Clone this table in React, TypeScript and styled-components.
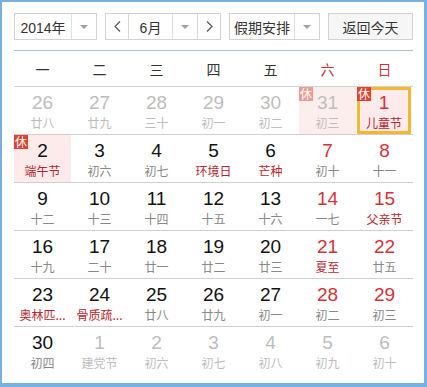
import React from 'react';
import styled, { createGlobalStyle, css } from 'styled-components';

const GlobalStyle = createGlobalStyle`
    html, body {
        margin: 0;
        padding: 0;
        background: #ffffff;
    }
`;

const FONT = `"Liberation Sans", Arial, "Noto Sans CJK SC", sans-serif`;

const Frame = styled.div`
    width: 427px;
    height: 387px;
    box-sizing: border-box;
    border-style: solid;
    border-color: #78b0e2;
    border-width: 2px 3px 4px 2px;
    background: #ffffff;
    padding: 11px 11px 0 12px;
    font-family: ${FONT};
`;

const Toolbar = styled.div`
    display: flex;
    align-items: stretch;
    height: 27px;
    gap: 8px;
`;

const SelectBox = styled.div<{ $width: number; $gray?: boolean }>`
    display: flex;
    align-items: stretch;
    width: ${(p) => p.$width}px;
    box-sizing: border-box;
    border: 1px solid #d2d2d2;
    background: ${(p) => (p.$gray ? '#f6f6f6' : '#ffffff')};
    color: #333;
    font-size: 14px;
`;

const SelectLabel = styled.div`
    flex: 1;
    display: flex;
    align-items: center;
    justify-content: center;
    white-space: nowrap;
`;

const CaretCell = styled.div`
    width: 24px;
    display: flex;
    align-items: center;
    justify-content: center;
    border-left: 1px solid #e0e0e0;
    &::after {
        content: '';
        border-left: 4px solid transparent;
        border-right: 4px solid transparent;
        border-top: 4px solid #a0a0a0;
    }
`;

const ArrowCell = styled.div<{ $side: 'left' | 'right' }>`
    width: 22px;
    display: flex;
    align-items: center;
    justify-content: center;
    ${(p) =>
        p.$side === 'left'
            ? css`
                  border-right: 1px solid #d8d8d8;
              `
            : css`
                  border-left: 1px solid #d8d8d8;
              `}
`;

const Chevron = ({ dir }: { dir: 'left' | 'right' }) => (
    <svg width="7" height="11" viewBox="0 0 7 11">
        <path
            d={dir === 'left' ? 'M6 0.5 L1 5.5 L6 10.5' : 'M1 0.5 L6 5.5 L1 10.5'}
            fill="none"
            stroke="#555"
            strokeWidth="1.2"
        />
    </svg>
);

const HeaderRule = styled.div`
    margin-top: 10px;
    border-top: 1px solid #a6c1d8;
`;

const WeekHead = styled.div`
    display: grid;
    grid-template-columns: repeat(7, 57px);
    height: 35px;
    border-bottom: 1px solid #d3d3d3;
`;

const WeekName = styled.div<{ $weekend?: boolean }>`
    display: flex;
    align-items: center;
    justify-content: center;
    font-size: 14px;
    font-family: "Noto Sans CJK SC", sans-serif;
    color: ${(p) => (p.$weekend ? '#c8333a' : '#333')};
`;

const WeekRow = styled.div<{ $last?: boolean }>`
    display: grid;
    grid-template-columns: repeat(7, 57px);
    height: 48px;
    box-sizing: border-box;
    border-bottom: ${(p) => (p.$last ? 'none' : '1px solid #cfcfcf')};
`;

const Cell = styled.div<{ $rest?: 'on' | 'faded'; $today?: boolean }>`
    position: relative;
    display: flex;
    flex-direction: column;
    align-items: center;
    box-sizing: border-box;
    padding-top: 6px;
    background: ${(p) => (p.$rest === 'on' ? '#fdeaea' : p.$rest === 'faded' ? '#fdeeee' : 'transparent')};
    ${(p) =>
        p.$today &&
        css`
            border: 3px solid #f4b72f;
            margin: 0 2px 0 1px;
            padding-top: 3px;
        `}
`;

const RestBadge = styled.span<{ $faded?: boolean; $today?: boolean }>`
    position: absolute;
    top: ${(p) => (p.$today ? '-3px' : '0')};
    left: ${(p) => (p.$today ? '-3px' : '0')};
    width: 14px;
    height: 14px;
    background: ${(p) => (p.$faded ? '#ee9b92' : '#e2412f')};
    color: #fff;
    font-size: 12px;
    line-height: 14px;
    text-align: center;
    font-family: "Noto Sans CJK SC", sans-serif;
`;

const DayNum = styled.div<{ $tone: 'normal' | 'red' | 'muted' }>`
    font-size: 19px;
    line-height: 20px;
    color: ${(p) => (p.$tone === 'red' ? '#d2333b' : p.$tone === 'muted' ? '#bdbdbd' : '#111')};
`;

const Lunar = styled.div<{ $tone: 'normal' | 'fest' | 'muted' }>`
    margin-top: 2px;
    font-size: 12px;
    line-height: 16px;
    font-family: "Noto Sans CJK SC", sans-serif;
    white-space: nowrap;
    color: ${(p) => (p.$tone === 'fest' ? '#b8262d' : p.$tone === 'muted' ? '#bdbdbd' : '#888')};
`;

type Day = {
    n: number;
    sub: string;
    other?: boolean;
    fest?: boolean;
    rest?: boolean;
    today?: boolean;
};

const weeks: Day[][] = [
    [
        { n: 26, sub: '廿八', other: true },
        { n: 27, sub: '廿九', other: true },
        { n: 28, sub: '三十', other: true },
        { n: 29, sub: '初一', other: true },
        { n: 30, sub: '初二', other: true },
        { n: 31, sub: '初三', other: true, rest: true },
        { n: 1, sub: '儿童节', fest: true, rest: true, today: true },
    ],
    [
        { n: 2, sub: '端午节', fest: true, rest: true },
        { n: 3, sub: '初六' },
        { n: 4, sub: '初七' },
        { n: 5, sub: '环境日', fest: true },
        { n: 6, sub: '芒种', fest: true },
        { n: 7, sub: '初十' },
        { n: 8, sub: '十一' },
    ],
    [
        { n: 9, sub: '十二' },
        { n: 10, sub: '十三' },
        { n: 11, sub: '十四' },
        { n: 12, sub: '十五' },
        { n: 13, sub: '十六' },
        { n: 14, sub: '一七' },
        { n: 15, sub: '父亲节', fest: true },
    ],
    [
        { n: 16, sub: '十九' },
        { n: 17, sub: '二十' },
        { n: 18, sub: '廿一' },
        { n: 19, sub: '廿二' },
        { n: 20, sub: '廿三' },
        { n: 21, sub: '夏至', fest: true },
        { n: 22, sub: '廿五' },
    ],
    [
        { n: 23, sub: '奥林匹...', fest: true },
        { n: 24, sub: '骨质疏...', fest: true },
        { n: 25, sub: '廿八' },
        { n: 26, sub: '廿九' },
        { n: 27, sub: '初一' },
        { n: 28, sub: '初二' },
        { n: 29, sub: '初三' },
    ],
    [
        { n: 30, sub: '初四' },
        { n: 1, sub: '建党节', other: true },
        { n: 2, sub: '初六', other: true },
        { n: 3, sub: '初七', other: true },
        { n: 4, sub: '初八', other: true },
        { n: 5, sub: '初九', other: true },
        { n: 6, sub: '初十', other: true },
    ],
];

const weekNames = ['一', '二', '三', '四', '五', '六', '日'];

export default function App() {
    return (
        <>
            <GlobalStyle />
            <Frame>
                <Toolbar>
                    <SelectBox $width={83}>
                        <SelectLabel>2014年</SelectLabel>
                        <CaretCell />
                    </SelectBox>
                    <SelectBox $width={116}>
                        <ArrowCell $side="left">
                            <Chevron dir="left" />
                        </ArrowCell>
                        <SelectLabel>6月</SelectLabel>
                        <CaretCell />
                        <ArrowCell $side="right">
                            <Chevron dir="right" />
                        </ArrowCell>
                    </SelectBox>
                    <SelectBox $width={91}>
                        <SelectLabel>假期安排</SelectLabel>
                        <CaretCell />
                    </SelectBox>
                    <SelectBox $width={85} $gray>
                        <SelectLabel>返回今天</SelectLabel>
                    </SelectBox>
                </Toolbar>
                <HeaderRule />
                <WeekHead>
                    {weekNames.map((w, i) => (
                        <WeekName key={w} $weekend={i >= 5}>
                            {w}
                        </WeekName>
                    ))}
                </WeekHead>
                {weeks.map((week, wi) => (
                    <WeekRow key={wi} $last={wi === weeks.length - 1}>
                        {week.map((d, di) => {
                            const weekend = di >= 5;
                            const numTone = d.other ? 'muted' : weekend ? 'red' : 'normal';
                            const subTone = d.other ? 'muted' : d.fest ? 'fest' : 'normal';
                            const rest = d.rest ? (d.other ? 'faded' : 'on') : undefined;
                            return (
                                <Cell key={di} $rest={rest} $today={d.today}>
                                    {d.rest && <RestBadge $faded={d.other} $today={d.today}>休</RestBadge>}
                                    <DayNum $tone={numTone}>{d.n}</DayNum>
                                    <Lunar $tone={subTone}>{d.sub}</Lunar>
                                </Cell>
                            );
                        })}
                    </WeekRow>
                ))}
            </Frame>
        </>
    );
}
